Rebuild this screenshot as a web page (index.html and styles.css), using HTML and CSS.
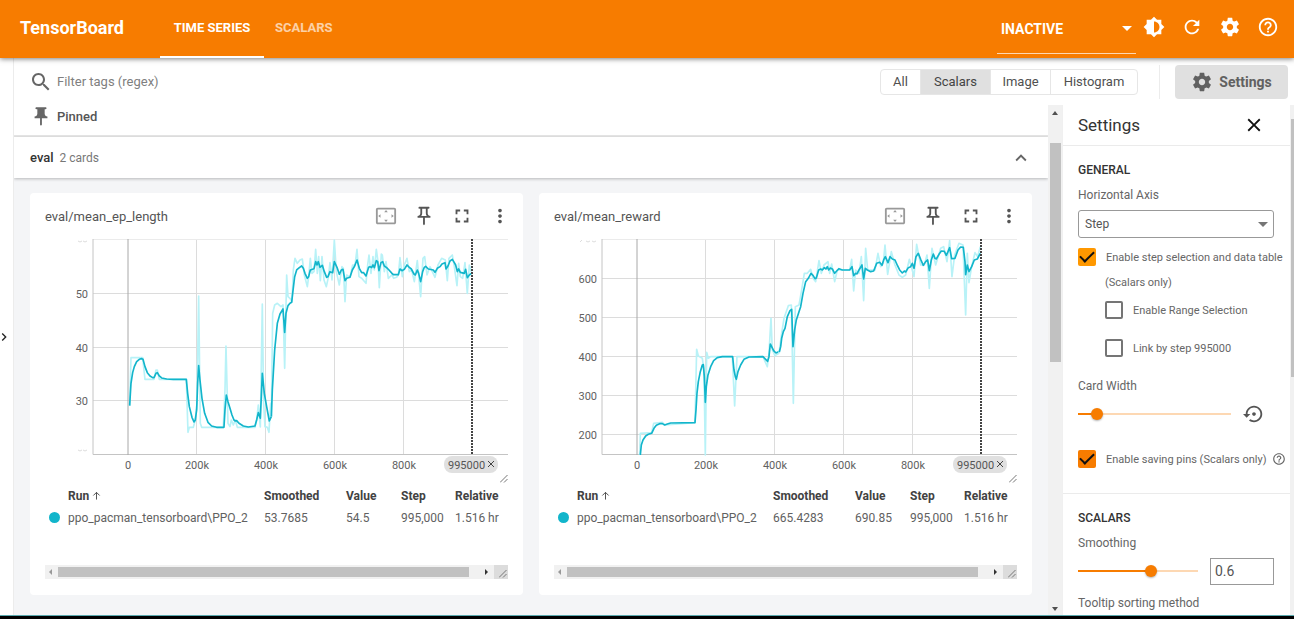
FILE: index.html
```
<!DOCTYPE html>
<html lang="en">
<head>
<meta charset="utf-8">
<title>TensorBoard</title>
<link rel="stylesheet" href="styles.css">
</head>
<body>
<svg class="defs" aria-hidden="true">
  <symbol id="gear" viewBox="0 0 24 24"><path d="M19.43 12.98c.04-.32.07-.64.07-.98s-.03-.66-.07-.98l2.11-1.65c.19-.15.24-.42.12-.64l-2-3.46c-.12-.22-.39-.3-.61-.22l-2.49 1c-.52-.4-1.08-.73-1.69-.98l-.38-2.65C14.46 2.18 14.25 2 14 2h-4c-.25 0-.46.18-.49.42l-.38 2.65c-.61.25-1.17.59-1.69.98l-2.49-1c-.23-.09-.49 0-.61.22l-2 3.46c-.13.22-.07.49.12.64l2.11 1.65c-.04.32-.07.65-.07.98s.03.66.07.98l-2.11 1.65c-.19.15-.24.42-.12.64l2 3.46c.12.22.39.3.61.22l2.49-1c.52.4 1.08.73 1.69.98l.38 2.65c.03.24.24.42.49.42h4c.25 0 .46-.18.49-.42l.38-2.65c.61-.25 1.17-.59 1.69-.98l2.49 1c.23.09.49 0 .61-.22l2-3.46c.12-.22.07-.49-.12-.64l-2.11-1.65zM12 15.5c-1.93 0-3.5-1.57-3.5-3.5s1.57-3.5 3.5-3.5 3.5 1.57 3.5 3.5-1.57 3.5-3.5 3.5z"/></symbol>
  <symbol id="help" viewBox="0 0 24 24"><path d="M11 18h2v-2h-2v2zm1-16C6.48 2 2 6.48 2 12s4.48 10 10 10 10-4.48 10-10S17.520 2 12 2zm0 18c-4.410 0-8-3.590-8-8s3.590-8 8-8 8 3.590 8 8-3.590 8-8 8zm0-14c-2.210 0-4 1.790-4 4h2c0-1.100.900-2 2-2s2 .900 2 2c0 2-3 1.750-3 5h2c0-2.250 3-2.500 3-5 0-2.210-1.790-4-4-4z"/></symbol>
  <symbol id="fit" viewBox="0 0 24 24"><path d="M12.010 5.500L10 8h4l-1.990-2.500zM18 10v4l2.500-1.990L18 10zM6 10l-2.500 2.010L6 14v-4zm8 6h-4l2.010 2.500L14 16zm7-13H3c-1.100 0-2 .900-2 2v14c0 1.100.900 2 2 2h18c1.100 0 2-.900 2-2V5c0-1.100-.900-2-2-2zm0 16.010H3V4.990h18v14.020z"/></symbol>
  <symbol id="pin" viewBox="0 0 24 24"><path d="M14 4v5c0 1.120.370 2.160 1 3H9c.650-.860 1-1.900 1-3V4h4m3-2H7c-.550 0-1 .450-1 1s.450 1 1 1h1v5c0 1.660-1.340 3-3 3v2h5.970v7l1 1 1-1v-7H19v-2c-1.660 0-3-1.340-3-3V4h1c.550 0 1-.450 1-1s-.450-1-1-1z"/></symbol>
  <symbol id="full" viewBox="0 0 24 24"><path d="M7 14H5v5h5v-2H7v-3zm-2-4h2V7h3V5H5v5zm12 7h-3v2h5v-5h-2v3zM14 5v2h3v3h2V5h-5z"/></symbol>
  <symbol id="more" viewBox="0 0 24 24"><path d="M12 8c1.100 0 2-.900 2-2s-.900-2-2-2-2 .900-2 2 .900 2 2 2zm0 2c-1.100 0-2 .900-2 2s.900 2 2 2 2-.900 2-2-.900-2-2-2zm0 6c-1.100 0-2 .900-2 2s.900 2 2 2 2-.900 2-2-.900-2-2-2z"/></symbol>
  <symbol id="close" viewBox="0 0 24 24"><path d="M19 6.410L17.590 5 12 10.590 6.410 5 5 6.410 10.590 12 5 17.590 6.410 19 12 13.410 17.590 19 19 17.590 13.410 12z"/></symbol>
  <symbol id="grip" viewBox="0 0 8 8"><path d="M0 7.500L7.500 0M4 7.500L7.500 4" fill="none" stroke="#777"/></symbol>
</svg>

<header class="topbar">
  <h1 class="brand">TensorBoard</h1>
  <nav class="tabs">
    <button class="tab tab-active">TIME SERIES</button>
    <button class="tab">SCALARS</button>
  </nav>
  <button class="plugin-select"><span>INACTIVE</span><i class="caret"></i></button>
  <div class="top-actions">
    <button class="icon-btn" aria-label="Theme"><svg viewBox="0 0 24 24"><path d="M20 15.310L23.310 12 20 8.690V4h-4.690L12 .690 8.690 4H4v4.690L.690 12 4 15.310V20h4.690L12 23.310 15.310 20H20v-4.690zM12 18V6c3.310 0 6 2.690 6 6s-2.690 6-6 6z"/></svg></button>
    <button class="icon-btn" aria-label="Reload"><svg viewBox="0 0 24 24"><path d="M17.650 6.350C16.200 4.900 14.210 4 12 4c-4.420 0-7.990 3.580-7.990 8s3.570 8 7.990 8c3.730 0 6.840-2.550 7.730-6h-2.080c-.820 2.330-3.040 4-5.650 4-3.310 0-6-2.690-6-6s2.690-6 6-6c1.660 0 3.140.690 4.220 1.780L13 11h7V4l-2.350 2.350z"/></svg></button>
    <button class="icon-btn" aria-label="Options"><svg><use href="#gear"/></svg></button>
    <button class="icon-btn" aria-label="Help"><svg><use href="#help"/></svg></button>
  </div>
</header>

<div class="workspace">
  <aside class="runs-rail"><button class="expand-runs" aria-label="Show runs"><svg viewBox="0 0 24 24"><path d="M10 6L8.590 7.410 13.170 12l-4.580 4.590L10 18l6-6z"/></svg></button></aside>
  <div class="dashboard">
    <div class="filterbar">
      <svg class="search-icon" viewBox="0 0 24 24"><path d="M15.500 14h-.790l-.280-.270C15.410 12.590 16 11.110 16 9.500 16 5.910 13.090 3 9.500 3S3 5.910 3 9.500 5.910 16 9.500 16c1.610 0 3.090-.590 4.230-1.570l.270.280v.790l5 4.990L20.490 19l-4.990-5zm-6 0C7.010 14 5 11.990 5 9.500S7.010 5 9.500 5 14 7.010 14 9.500 11.990 14 9.500 14z"/></svg>
      <input class="filter-input" type="text" placeholder="Filter tags (regex)" aria-label="Filter tags (regex)">
      <div class="type-group">
        <button class="type">All</button>
        <button class="type type-on">Scalars</button>
        <button class="type">Image</button>
        <button class="type">Histogram</button>
      </div>
      <div class="settings-slot"><button class="settings-btn"><svg><use href="#gear"/></svg>Settings</button></div>
    </div>

    <div class="panes">
      <main class="cards-pane">
        <div class="pinned"><svg viewBox="0 0 24 24"><path d="M16 9V4h1c.550 0 1-.450 1-1s-.450-1-1-1H7c-.550 0-1 .450-1 1s.450 1 1 1h1v5c0 1.660-1.340 3-3 3v2h5.970v7l1 1 1-1v-7H19v-2c-1.660 0-3-1.340-3-3z"/></svg><h2>Pinned</h2></div>
        <div class="group-head"><h2>eval</h2><span>2 cards</span><button class="collapse" aria-label="Collapse"><svg viewBox="0 0 24 24"><path d="M12 8l-6 6 1.410 1.410L12 10.830l4.590 4.580L18 14z"/></svg></button></div>
        <div class="card-grid">

          <article class="card">
            <div class="card-head"><h3>eval/mean_ep_length</h3>
              <button class="card-btn card-btn-dim" aria-label="Fit domain"><svg><use href="#fit"/></svg></button>
              <button class="card-btn" aria-label="Pin card"><svg><use href="#pin"/></svg></button>
              <button class="card-btn" aria-label="Full size"><svg><use href="#full"/></svg></button>
              <button class="card-btn" aria-label="More"><svg><use href="#more"/></svg></button>
            </div>
            <svg class="chart" viewBox="0 0 463 246">
              <path class="grid" d="M48 54.500H463M48 108.500H463M48 161.500H463M151.500 0V216M220.500 0V216M289.500 0V216M358.500 0V216"/>
              <path class="frame-top" d="M48 .500H463"/>
              <path class="frame" d="M48 0V215.500H463"/>
              <path class="zero" d="M83 0V216"/>
              <g class="ylab"><text x="43" y="59">50</text><text x="43" y="113">40</text><text x="43" y="166">30</text></g>
              <path class="faded" d="M33 2q2 2 4 0M38 2q2 2 4 0M33 211q2 2 4 0M38 211q2 2 4 0"/>
              <g transform="translate(-15 -49) scale(.3333)">
                <polyline class="raw" points="299,647 303,503 338,503 345,568 372,568 378,540 382,540 388,568 469,568 474,727 478,712 490,712 496,690 501,640 506,318 511,700 515,712 580,712 585,600 588,468 594,700 600,710 604,690 610,705 616,690 622,712 675,712 680,690 685,645 691,711 697,342 701,640 705,710 712,712 717,727 722,640 724,680"/>
                <polyline class="smooth" points="299,647 303,580 308,548 313,530 320,515 328,508 335,506 339,508 345,530 352,548 360,558 368,563 372,563 378,550 382,548 388,558 395,564 410,567 430,568 469,568 473,610 478,650 486,682 492,696 496,690 500,660 503,580 506,527 510,570 516,625 524,670 534,697 545,708 560,712 582,712 585,660 589,615 594,635 600,655 606,675 612,690 616,693 620,692 627,700 640,708 655,711 675,708 680,690 685,668 691,685 694,620 697,550 703,610 710,650 718,693 724,680"/>
              </g>
              <g transform="translate(225 -49) scale(.3333)">
                <polyline class="raw" points="4,680 8,370 14,345 22,340 33,350 39,345 44,535 50,255 54,320 60,325 66,335 70,240 75,205 82,220 90,210 97,207 103,255 112,290 116,260 121,205 126,250 132,245 137,178 142,250 146,200 151,272 156,200 162,270 169,290 175,262 180,218 186,270 193,150 199,245 208,285 216,230 220,235 225,335 230,255 240,262 248,225 255,225 261,178 267,260 275,265 288,280 293,225 297,195 303,250 309,200 313,240 319,178 324,215 328,293 334,192 337,195 343,245 348,215 355,265 366,255 371,265 380,262 385,255 390,203 397,260 403,225 411,205 418,245 425,240 433,275 442,212 447,265 452,320 459,205 464,200 471,255 480,230 495,262 504,225 515,205 526,210 532,272 537,205 547,195 553,230 561,287 566,220 571,260 578,265 585,218 592,310 598,225 604,245"/>
                <polyline class="smooth" points="4,680 7,600 14,480 22,400 30,372 39,357 44,427 48,370 54,347 60,340 65,337 68,310 74,260 80,240 88,233 95,228 100,235 105,250 112,265 116,260 121,240 132,236 137,215 141,225 145,215 150,232 157,226 163,245 170,262 174,260 180,245 188,248 193,215 201,232 208,253 214,240 219,238 225,272 230,265 240,262 247,240 254,228 261,210 268,235 275,248 281,248 288,258 296,232 300,230 305,233 309,225 313,233 319,212 323,215 327,242 333,218 338,215 343,228 350,233 357,240 366,250 370,254 385,254 390,237 396,242 403,238 411,225 418,232 424,237 432,252 436,255 442,240 446,250 452,275 458,245 463,232 467,229 475,237 490,240 495,247 502,235 510,230 516,222 525,218 528,237 534,228 540,213 547,208 553,218 557,225 562,245 566,237 571,247 583,250 587,238 592,263 598,255 604,250"/>
              </g>
              <path class="step-line" d="M427 0V216"/>
              <g class="xlab"><text x="83" y="230">0</text><text x="152" y="230">200k</text><text x="221" y="230">400k</text><text x="290" y="230">600k</text><text x="359" y="230">800k</text></g>
              <rect class="step-chip" x="399" y="217" width="54" height="17" rx="8"/>
              <text class="step-text" x="403" y="230">995000</text>
              <path class="step-x" d="M443 222l6 6M449 222l-6 6"/>
              <use href="#grip" x="455" y="236" width="8" height="8"/>
            </svg>
            <table class="runs">
              <thead><tr><th class="c-dot"></th><th class="c-run">Run <svg class="arrow" viewBox="0 0 10 10"><path d="M5 9.500V1.500M1.500 5L5 1.500 8.500 5"/></svg></th><th class="c-smooth">Smoothed</th><th class="c-value">Value</th><th class="c-step">Step</th><th>Relative</th></tr></thead>
              <tbody><tr><td><i class="dot"></i></td><td>ppo_pacman_tensorboard\PPO_2</td><td>53.7685</td><td>54.5</td><td>995,000</td><td>1.516 hr</td></tr></tbody>
            </table>
            <div class="hscroll"><i class="arr-left"></i><div class="hthumb"></div><i class="arr-right"></i><span class="corner"><svg><use href="#grip"/></svg></span></div>
          </article>

          <article class="card">
            <div class="card-head"><h3>eval/mean_reward</h3>
              <button class="card-btn card-btn-dim" aria-label="Fit domain"><svg><use href="#fit"/></svg></button>
              <button class="card-btn" aria-label="Pin card"><svg><use href="#pin"/></svg></button>
              <button class="card-btn" aria-label="Full size"><svg><use href="#full"/></svg></button>
              <button class="card-btn" aria-label="More"><svg><use href="#more"/></svg></button>
            </div>
            <svg class="chart" viewBox="0 0 463 246">
              <path class="grid" d="M48 39.500H463M48 78.500H463M48 117.500H463M48 156.500H463M48 195.500H463M151.500 0V216M220.500 0V216M289.500 0V216M358.500 0V216"/>
              <path class="frame-top" d="M48 .500H463"/>
              <path class="frame" d="M48 0V215.500H463"/>
              <path class="zero" d="M83 0V216"/>
              <g class="ylab"><text x="43" y="44">600</text><text x="43" y="83">500</text><text x="43" y="122">400</text><text x="43" y="161">300</text><text x="43" y="200">200</text></g>
              <path class="faded" d="M26 3l2-2M32 2q2 2 4 0M38 2q2 2 4 0"/>
              <g transform="translate(-15 -49) scale(.3333)">
                <polyline class="raw" points="302,795 304,730 338,728 344,700 370,697 378,705 468,698 473,478 478,498 490,505 495,540 499,795 503,487 508,505 515,500 580,500 587,648 594,500 672,500 685,530 690,490 696,385 700,480 708,497 720,490"/>
                <polyline class="smooth" points="304,795 307,765 312,750 320,738 328,733 338,730 345,715 352,706 362,701 370,701 377,705 385,702 395,699 468,698 471,660 474,610 478,575 484,545 490,525 493,524 496,560 499,637 502,590 507,555 515,530 524,512 535,503 550,500 581,500 585,540 589,560 592,568 597,545 605,525 615,508 630,501 672,500 680,508 686,514 690,500 694,462 698,470 704,482 711,489 717,486 721,486"/>
              </g>
              <g transform="translate(225 -49) scale(.3333)">
                <polyline class="raw" points="0,490 8,430 15,385 28,347 37,345 43,640 49,350 60,345 68,300 76,250 85,250 95,238 102,265 110,275 120,212 127,250 135,225 147,215 152,250 158,222 167,275 175,240 212,240 218,208 224,303 230,240 240,250 247,200 254,332 260,175 266,240 288,240 297,190 305,230 313,220 318,165 326,253 337,185 348,225 360,255 370,262 380,255 391,208 405,260 413,163 425,225 436,225 444,195 451,295 459,175 470,225 485,175 494,170 504,215 512,152 519,260 527,195 540,160 552,165 560,375 565,190 570,278 578,230 588,188 596,200 604,170"/>
                <polyline class="smooth" points="1,486 5,470 8,445 13,425 18,415 25,380 33,362 38,358 42,470 47,420 52,390 60,365 65,350 72,310 80,275 88,265 96,250 102,256 108,266 112,264 119,240 125,237 130,240 136,233 141,237 145,230 149,240 154,234 160,237 167,250 173,243 180,236 190,240 212,240 219,230 224,257 230,250 234,252 240,240 249,225 254,267 259,235 265,240 275,245 284,243 293,220 302,217 309,226 314,210 319,200 327,218 333,200 340,207 348,210 356,228 362,240 370,249 376,243 380,246 388,233 395,230 400,220 405,235 411,200 418,190 425,208 433,226 440,215 446,210 451,242 457,210 463,192 468,205 472,207 480,193 487,183 496,184 502,196 507,185 512,173 518,206 528,205 537,180 545,171 553,172 558,215 560,254 565,225 570,245 578,230 586,210 595,207 604,190"/>
              </g>
              <path class="step-line" d="M427 0V216"/>
              <g class="xlab"><text x="83" y="230">0</text><text x="152" y="230">200k</text><text x="221" y="230">400k</text><text x="290" y="230">600k</text><text x="359" y="230">800k</text></g>
              <rect class="step-chip" x="399" y="217" width="54" height="17" rx="8"/>
              <text class="step-text" x="403" y="230">995000</text>
              <path class="step-x" d="M443 222l6 6M449 222l-6 6"/>
              <use href="#grip" x="455" y="236" width="8" height="8"/>
            </svg>
            <table class="runs">
              <thead><tr><th class="c-dot"></th><th class="c-run">Run <svg class="arrow" viewBox="0 0 10 10"><path d="M5 9.500V1.500M1.500 5L5 1.500 8.500 5"/></svg></th><th class="c-smooth">Smoothed</th><th class="c-value">Value</th><th class="c-step">Step</th><th>Relative</th></tr></thead>
              <tbody><tr><td><i class="dot"></i></td><td>ppo_pacman_tensorboard\PPO_2</td><td>665.4283</td><td>690.85</td><td>995,000</td><td>1.516 hr</td></tr></tbody>
            </table>
            <div class="hscroll"><i class="arr-left"></i><div class="hthumb"></div><i class="arr-right"></i><span class="corner"><svg><use href="#grip"/></svg></span></div>
          </article>
        </div>
      </main>

      <div class="vscroll"><i class="arr-up"></i><div class="vthumb vthumb-main"></div><i class="arr-down"></i></div>

      <aside class="settings">
        <div class="settings-head"><h2>Settings</h2><button class="close-btn" aria-label="Close"><svg><use href="#close"/></svg></button></div>
        <section class="section">
          <h3>GENERAL</h3>
          <label class="caption" for="axis">Horizontal Axis</label>
          <div class="select-wrap"><select id="axis"><option>Step</option></select></div>
          <label class="check check-amber"><input type="checkbox" checked><span>Enable step selection and data table</span></label>
          <p class="check-note">(Scalars only)</p>
          <label class="check check-sub"><input type="checkbox"><span>Enable Range Selection</span></label>
          <label class="check check-sub check-link"><input type="checkbox"><span>Link by step 995000</span></label>
          <label class="caption caption-width" for="width">Card Width</label>
          <div class="slider-row width-row">
            <input class="slider slider-width" id="width" type="range" min="0" max="100" value="9">
            <button class="reset" aria-label="Reset card width"><svg viewBox="0 0 24 24"><path d="M14 12c0-1.100-.900-2-2-2s-2 .900-2 2 .900 2 2 2 2-.900 2-2zm-2-9c-4.970 0-9 4.030-9 9H0l4 4 4-4H5c0-3.870 3.130-7 7-7s7 3.130 7 7-3.130 7-7 7c-1.510 0-2.910-.490-4.060-1.300l-1.420 1.440C8.040 20.300 9.940 21 12 21c4.970 0 9-4.030 9-9s-4.030-9-9-9z"/></svg></button>
          </div>
          <label class="check check-pins"><input type="checkbox" checked><span>Enable saving pins (Scalars only)</span><svg class="hint"><use href="#help"/></svg></label>
        </section>
        <section class="section">
          <h3>SCALARS</h3>
          <label class="caption" for="smoothing">Smoothing</label>
          <div class="slider-row smoothing-row">
            <input class="slider slider-smooth" id="smoothing" type="range" min="0" max="100" value="62">
            <input class="number" type="text" value="0.6" aria-label="Smoothing value">
          </div>
          <p class="caption caption-tooltip">Tooltip sorting method</p>
        </section>
      </aside>
      <div class="edge-scroll"><div class="vthumb vthumb-edge"></div></div>
    </div>
  </div>
</div>
<footer class="bottom-edge"></footer>
</body>
</html>
```
FILE: styles.css
```
* { box-sizing: border-box; }
body {
  margin: 0;
  height: 100vh;
  display: flex;
  flex-direction: column;
  overflow: hidden;
  font-family: Roboto, "Liberation Sans", sans-serif;
  font-size: 12px;
  color: #666;
  background: #fff;
}
h1, h2, h3, p { margin: 0; }
button { font-family: inherit; border: 0; padding: 0; margin: 0; background: none; color: inherit; cursor: pointer; }
svg { fill: currentColor; }
.defs { display: none; }

/* Top bar */
.topbar {
  flex: none;
  height: 58px;
  display: flex;
  align-items: stretch;
  padding-right: 14px;
  background: #f77c00;
  color: #fff;
  box-shadow: 0 1px 5px rgba(0, 0, 0, .5);
  position: relative;
  z-index: 2;
}
.brand { width: 160px; padding-left: 20px; font-size: 18px; font-weight: 700; line-height: 55px; }
.tabs { display: flex; flex: 1; }
.tab { padding: 0 11px 3px; font-size: 13px; font-weight: 700; opacity: .65; }
.tab-active { width: 104px; padding: 0 0 1px; opacity: 1; border-bottom: 2px solid #fff; }
.plugin-select {
  width: 139px;
  height: 54px;
  display: flex;
  align-items: center;
  justify-content: space-between;
  padding: 4px 4px 0;
  border-bottom: 1px solid #fff;
  border-color: rgba(255, 255, 255, .7);
  font-size: 14px;
  font-weight: 700;
}
.caret { border: 5px solid transparent; border-top-color: #fff; border-bottom: 0; }
.top-actions { display: flex; gap: 14px; margin-left: 6px; padding-bottom: 4px; align-items: center; }
.icon-btn, .icon-btn svg { display: block; width: 24px; height: 24px; }
.icon-btn svg { padding: 1px; }

/* Workspace */
.workspace { flex: 1; min-height: 0; display: flex; }
.runs-rail { width: 14px; display: flex; align-items: center; border-right: 1px solid #ececec; color: #222; }
.expand-runs svg { display: block; width: 16px; height: 16px; margin-left: -4px; }
.dashboard { flex: 1; min-width: 0; display: flex; flex-direction: column; }

.filterbar { flex: none; height: 47px; display: flex; align-items: center; padding: 0 6px 0 15px; }
.search-icon { width: 24px; height: 24px; }
.filter-input { flex: 1; min-width: 0; margin-left: 4px; padding: 0; border: 0; outline: 0; font: 13px Roboto, sans-serif; color: #555; }
.filter-input::placeholder { color: #808080; opacity: 1; }
.type-group { display: grid; grid-template-columns: 39px 70px 60px 87px; height: 26px; border: 1px solid #e6e6e6; border-radius: 4px; overflow: hidden; }
.type { font-size: 13px; color: #505050; border-left: 1px solid #e6e6e6; }
.type:first-child { border-left: 0; }
.type-on { background: #e0e0e0; color: #444; }
.settings-slot { margin-left: 21px; padding-left: 15px; height: 34px; border-left: 1px solid #ececec; }
.settings-btn { width: 113px; height: 34px; display: flex; align-items: center; justify-content: center; gap: 6px; border-radius: 4px; background: #e0e0e0; font-size: 14px; font-weight: 700; color: #616161; }
.settings-btn svg { width: 22px; height: 22px; }

.panes { flex: 1; min-height: 0; display: flex; }
.cards-pane { flex: 1; min-width: 0; overflow: hidden; background: #f4f5f7; }
.pinned { height: 32px; display: flex; align-items: flex-start; gap: 5px; padding-left: 16px; background: #fff; border-bottom: 2px solid #e6e6e6; }
.pinned svg { width: 22px; height: 23px; }
.pinned h2 { font-size: 13px; font-weight: 500; line-height: 24px; color: #555; }
.group-head { height: 41px; display: flex; align-items: center; gap: 6px; padding: 0 16px 0 16px; background: #fff; box-shadow: 0 1px 3px rgba(0, 0, 0, .25); }
.group-head h2 { font-size: 13px; font-weight: 500; color: #333; }
.group-head span { flex: 1; color: #777; }
.collapse svg { display: block; width: 22px; height: 22px; }

/* Cards */
.card-grid { display: grid; grid-template-columns: 1fr 1fr; gap: 16px; padding: 15px 16px; }
.card { padding: 0 15px 16px; background: #fff; border-radius: 4px; }
.card-head { height: 46px; display: flex; align-items: center; gap: 14px; }
.card-head h3 { flex: 1; font-size: 13px; font-weight: 400; color: #555; }
.card-btn { width: 24px; height: 24px; color: #555; }
.card-btn:last-child { margin-right: -4px; }
.card-btn-dim { color: #999; }
.card-btn svg { display: block; width: 24px; height: 24px; padding: 1px; }

.chart { display: block; width: 100%; overflow: visible; font-size: 11px; }
.grid, .frame, .frame-top, .zero, .faded { fill: none; }
.grid { stroke: #dcdcdc; }
.frame-top { stroke: #ebebeb; }
.frame { stroke: #c4c4c4; }
.zero { stroke: #a8a8a8; }
.faded { stroke: #ddd; }
.ylab { text-anchor: end; fill: #616161; }
.xlab { text-anchor: middle; fill: #616161; }
.raw, .smooth { fill: none; stroke: #12b5cb; stroke-width: 5; stroke-linejoin: round; }
.raw { stroke: #b8f2f7; }
.step-line { stroke: #444; stroke-width: 2; stroke-dasharray: 2 1; }
.step-chip { fill: #e0e0e0; }
.step-text { fill: #555; }
.step-x { stroke: #444; fill: none; }

.runs { width: 100%; table-layout: fixed; border-collapse: collapse; }
.runs th, .runs td { padding: 0; text-align: left; white-space: nowrap; }
.runs th { height: 21px; font-size: 12px; font-weight: 700; color: #424242; }
.runs td { height: 23px; font-size: 12px; color: #616161; }
.c-dot { width: 23px; }
.c-run { width: 196px; }
.c-smooth { width: 82px; }
.c-value { width: 55px; }
.c-step { width: 54px; }
.arrow { width: 9px; height: 9px; fill: none; stroke: #424242; }
.dot { display: block; width: 11px; height: 11px; margin-left: 4px; border-radius: 50%; background: #12b5cb; }

.hscroll { height: 14px; margin-top: 36px; display: flex; align-items: center; background: #f1f1f1; }
.arr-left { margin: 0 6px 0 4px; border: 3px solid transparent; border-right-color: #999; border-left: 0; }
.hthumb { flex: 1; height: 10px; background: #c1c1c1; }
.arr-right { margin: 0 6px 0 16px; border: 3px solid transparent; border-left-color: #333; border-right: 0; }
.corner { width: 14px; height: 14px; padding: 5px 1px 1px 5px; background: #dcdcdc; }
.corner svg { display: block; width: 8px; height: 8px; }

.vscroll { width: 14px; display: flex; flex-direction: column; align-items: center; background: #f1f1f1; }
.vthumb { background: #c1c1c1; }
.vthumb-main { width: 11px; height: 43%; margin: 28px 0 auto; }
.arr-up { margin-top: 6px; border: 3px solid transparent; border-bottom: 4px solid #505050; border-top: 0; }
.arr-down { margin-bottom: 4px; border: 3px solid transparent; border-top: 4px solid #505050; border-bottom: 0; }
.edge-scroll { width: 4px; padding: 14px 0 0 1px; background: #f1f1f1; }
.vthumb-edge { height: 52%; }

/* Settings panel */
.settings { width: 228px; overflow: hidden; background: #fff; border-left: 1px solid #f0f0f0; }
.settings-head { height: 41px; display: flex; align-items: center; justify-content: space-between; padding: 0 25px 0 15px; border-bottom: 1px solid #ebebeb; }
.settings-head h2 { font-size: 17px; font-weight: 400; color: #333; }
.close-btn { color: #111; }
.close-btn svg { display: block; width: 22px; height: 22px; }
.section { padding: 14px 0 21px 15px; border-bottom: 1px solid #ebebeb; }
.section h3 { margin-bottom: 5px; font-size: 12px; font-weight: 500; line-height: 20px; color: #333; }
.caption { display: block; line-height: 20px; color: #666; }
.select-wrap { position: relative; margin: 5px 16px 6px 0; }
.select-wrap::after { content: ""; position: absolute; right: 6px; top: 12px; border: 5px solid transparent; border-top-color: #757575; border-bottom: 0; }
.select-wrap select { display: block; appearance: none; width: 100%; height: 28px; padding: 0 6px; border: 1px solid #999; border-radius: 3px; background: #fff; font: 12px Roboto, sans-serif; color: #555; }
.check { height: 26px; display: flex; align-items: center; white-space: nowrap; font-size: 11px; }
.check input { appearance: none; flex: none; width: 18px; height: 18px; margin: 0 10px 0 0; border: 2px solid #757575; border-radius: 2px; display: grid; place-items: center; }
.check input:checked { border: 0; background: #f77c00; }
.check input:checked::after { content: ""; width: 12px; height: 6px; margin-bottom: 4px; border: solid #111; border-width: 0 0 2px 2px; transform: rotate(-45deg); }
.check-amber input:checked { background: #ff9800; }
.check-note { padding-left: 27px; font-size: 11px; line-height: 26px; }
.check-sub { margin: 1px 0 0 27px; }
.check-link { margin-top: 12px; }
.caption-width { margin-top: 15px; }
.slider-row { display: flex; align-items: center; justify-content: space-between; }
.width-row { height: 24px; margin: 6px 25px 0 0; }
.slider { appearance: none; height: 13px; margin: 0; background: none; }
.slider::-webkit-slider-runnable-track { height: 2px; background: linear-gradient(to right, #f77c00 var(--fill), #fdd8b3 var(--fill)); }
.slider::-webkit-slider-thumb { appearance: none; width: 12px; height: 12px; margin-top: -5px; border-radius: 50%; background: #f77c00; box-shadow: 0 1px 2px rgba(0, 0, 0, .3); }
.slider-width { --fill: 12%; width: 153px; }
.slider-smooth { --fill: 62%; width: 120px; }
.reset { color: #555; }
.reset svg { display: block; width: 22px; height: 22px; }
.check-pins { margin-top: 20px; }
.hint { flex: none; width: 14px; height: 14px; margin-left: 5px; }
.smoothing-row { height: 28px; margin: 4px 16px 0 0; }
.number { width: 64px; height: 27px; padding: 0 4px; border: 1px solid #999; font: 14px Roboto, sans-serif; color: #555; }
.caption-tooltip { margin-top: 8px; }

.bottom-edge { flex: none; height: 4px; background: #000; border-top: 1px solid #5aa9ae; position: relative; z-index: 2; }
```
